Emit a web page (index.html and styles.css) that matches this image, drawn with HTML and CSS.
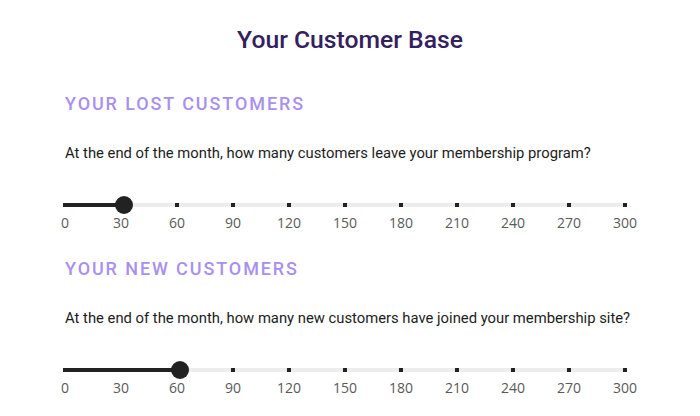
FILE: index.html
```html
<!DOCTYPE html>
<html>
<head>
<meta charset="utf-8">
<link rel="stylesheet" href="styles.css">
</head>
<body>
<div class="page">
  <h1 class="title">Your Customer Base</h1>

  <section class="block">
    <h2 class="heading">Your Lost Customers</h2>
    <p class="question">At the end of the month, how many customers leave your membership program?</p>
    <div class="slider">
      <div class="track">
        <div class="fill" style="width:10%"></div>
        <div class="ticks"><i></i><i></i><i></i><i></i><i></i><i></i><i></i><i></i><i></i><i></i><i></i></div>
        <div class="thumb" style="left:10%"></div>
      </div>
      <div class="labels"><span>0</span><span>30</span><span>60</span><span>90</span><span>120</span><span>150</span><span>180</span><span>210</span><span>240</span><span>270</span><span>300</span></div>
    </div>
  </section>

  <section class="block">
    <h2 class="heading">Your New Customers</h2>
    <p class="question">At the end of the month, how many new customers have joined your membership site?</p>
    <div class="slider">
      <div class="track">
        <div class="fill" style="width:20%"></div>
        <div class="ticks"><i></i><i></i><i></i><i></i><i></i><i></i><i></i><i></i><i></i><i></i><i></i></div>
        <div class="thumb" style="left:20%"></div>
      </div>
      <div class="labels"><span>0</span><span>30</span><span>60</span><span>90</span><span>120</span><span>150</span><span>180</span><span>210</span><span>240</span><span>270</span><span>300</span></div>
    </div>
  </section>
</div>
</body>
</html>
```
FILE: styles.css
```css
* { box-sizing: border-box; }
html, body { margin: 0; padding: 0; background: #fff; }
body { font-family: Roboto, "Liberation Sans", sans-serif; }

.page {
  width: 700px;
  padding: 24px 0 0 0;
  display: flex;
  flex-direction: column;
}

.title {
  margin: 0;
  text-align: center;
  font-size: 24.7px;
  line-height: 32px;
  font-weight: 500;
  color: #33205e;
}

.block {
  padding-left: 65px;
  display: flex;
  flex-direction: column;
}

.title + .block { margin-top: 36px; }
.block + .block { margin-top: 27px; }

.heading {
  margin: 0;
  font-size: 18px;
  line-height: 24px;
  font-weight: 500;
  letter-spacing: 1.9px;
  text-transform: uppercase;
  color: #a98ff0;
}

.question {
  margin: 27px 0 0 0;
  font-size: 14.8px;
  line-height: 20px;
  color: #1c1c1c;
}

.slider {
  margin-top: 32px;
  width: 560px;
}

.track {
  position: relative;
  height: 20px;
}

.track::before {
  content: "";
  position: absolute;
  left: 0;
  right: 0;
  top: 8px;
  height: 4px;
  background: #ececec;
}

.fill {
  position: absolute;
  left: 0;
  top: 8px;
  height: 4px;
  background: #222;
}

.ticks {
  position: absolute;
  left: -2px;
  right: -2px;
  top: 8px;
  height: 4px;
  display: flex;
  justify-content: space-between;
}

.ticks i {
  display: block;
  width: 4px;
  height: 4px;
  background: #222;
}

.thumb {
  position: absolute;
  top: 1px;
  width: 18px;
  height: 18px;
  margin-left: -6.5px;
  border-radius: 50%;
  background: #222;
}

.labels {
  display: flex;
  margin-left: -28px;
  width: 616px;
}

.labels span {
  width: 56px;
  text-align: center;
  font-family: "Open Sans", sans-serif;
  font-size: 14px;
  line-height: 15px;
  color: #5a5a5a;
}
```
